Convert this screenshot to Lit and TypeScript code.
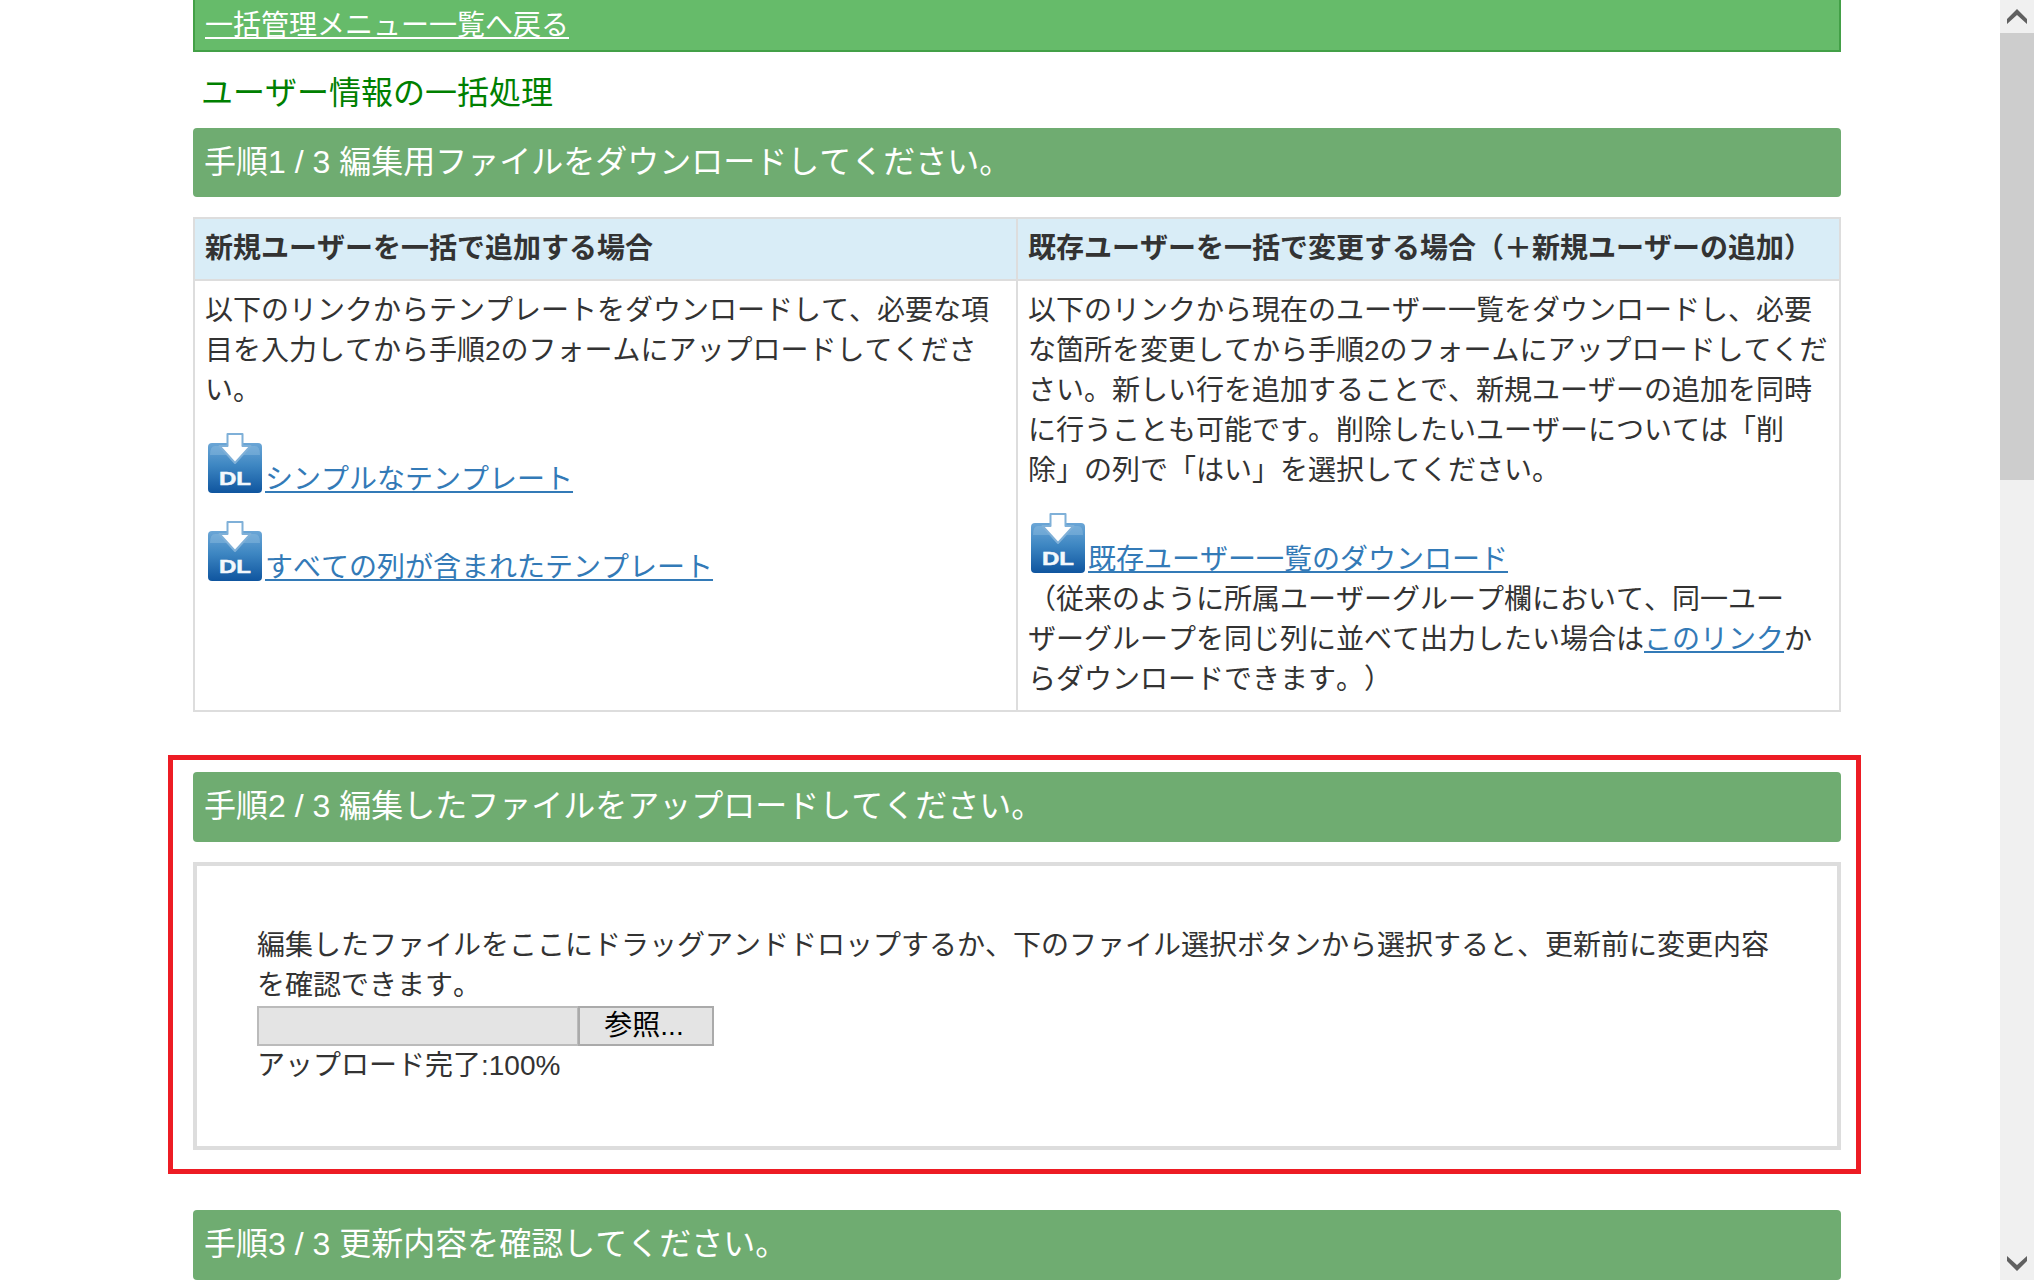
import { LitElement, html, css, svg } from "lit";
import { customElement } from "lit/decorators.js";

let gid = 0;
const dlIcon = () => {
  const id = `g${gid++}`;
  return html`<svg class="dl" viewBox="0 0 56 60" width="56" height="60" aria-hidden="true">
    ${svg`<defs><linearGradient id=${id} x1="0" y1="0" x2="0" y2="1">
      <stop offset="0" stop-color="#6ba6d6"/><stop offset=".45" stop-color="#3d86c2"/><stop offset="1" stop-color="#0f559f"/>
    </linearGradient></defs>
    <rect x="1" y="10" width="54" height="50" rx="4" fill="url(#${id})"/>
    <path d="M3 22 Q3 13 8 13 H48 Q53 13 53 22 Z" fill="#8fbde0" opacity=".45"/>
    <path d="M20.5 1 H35.5 V13 H43.5 L28 30 L12.5 13 H20.5 Z" fill="#fff" stroke="#7fb0d8" stroke-width="2" stroke-linejoin="round"/>
    <text x="28" y="52" text-anchor="middle" font-family="'Liberation Sans', sans-serif" font-weight="700" font-size="19" fill="#f4f8fc" stroke="#f4f8fc" stroke-width=".5" textLength="32" lengthAdjust="spacingAndGlyphs">DL</text>`}
  </svg>`;
};

@customElement("app-root")
export class AppRoot extends LitElement {
  static styles = css`
    :host {
      display: flex;
      height: 1280px;
      overflow: hidden;
      background: #fff;
      color: #333;
      font-family: "Liberation Sans", "Noto Sans CJK JP", sans-serif;
      font-size: 28px;
      line-height: 40px;
      line-break: strict;
      font-kerning: none;
      text-spacing-trim: space-all;
      font-feature-settings: "chws" 0, "kern" 0, "palt" 0;
    }
    .main { width: 2000px; flex: none; }
    .wrap { width: 1648px; margin-left: 193px; }
    .topbar {
      box-sizing: border-box;
      height: 52px;
      background: #66bb6a;
      border: 2px solid #43a047;
      border-top: 0;
      padding: 6px 10px 0;
      line-height: 40px;
    }
    .topbar a { color: #fff; }
    h1 {
      margin: 0;
      height: 76px;
      box-sizing: border-box;
      padding: 21px 0 0 8px;
      font-size: 32px;
      font-weight: 400;
      line-height: 40px;
      color: #008000;
    }
    .head {
      box-sizing: border-box;
      height: 69px;
      padding: 14px 11px;
      background: #6fac71;
      border-radius: 4px;
      color: #fff;
      font-size: 32px;
      line-height: 40px;
      white-space: nowrap;
    }
    .head.tall { height: 70px; }
    table {
      margin-top: 20px;
      width: 100%;
      table-layout: fixed;
      border-collapse: collapse;
      border: 2px solid #ddd;
    }
    th, td { border: 2px solid #ddd; text-align: left; vertical-align: top; }
    th { background: #d9edf7; font-weight: 700; padding: 10px; }
    td { padding: 10px; }
    p { margin: 0; }
    p.intro { margin-bottom: 22px; }
    p.dlrow { margin-bottom: 21px; }
    a { color: #337ab7; text-decoration: underline; }
    svg.dl { vertical-align: -4px; margin: 0 2px 0 2px; }
    .hl {
      margin: 43px -20px 36px -25px;
      padding: 12px 15px 19px 20px;
      border: 5px solid #ed1c24;
    }
    .box {
      box-sizing: border-box;
      height: 288px;
      margin-top: 20px;
      border: 4px solid #ddd;
      padding: 60px 60px 0;
    }
    .file { display: flex; height: 40px; }
    .file input {
      box-sizing: border-box;
      width: 321px;
      height: 40px;
      margin: 0;
      background: #e4e4e4;
      border: 2px solid #bbb;
      border-right-width: 1px;
      padding: 0;
    }
    .file button {
      box-sizing: border-box;
      width: 136px;
      height: 40px;
      margin: 0;
      padding: 0 4px 0 0;
      background: #e4e4e4;
      border: 2px solid #aaa;
      color: #000;
      font: inherit;
      line-height: 34px;
    }
    .scroll { width: 34px; flex: none; background: #f0f0f0; display: flex; flex-direction: column; height: 1280px; }
    .btn { height: 33px; flex: none; display: flex; align-items: center; justify-content: center; }
    .thumb { height: 447px; flex: none; background: #cdcdcd; }
    .track { flex: 1; }
    .btn svg { display: block; }
  `;

  render() {
    return html`
      <div class="main" lang="ja"><div class="wrap">
        <div class="topbar"><a href="#">一括管理メニュー一覧へ戻る</a></div>
        <h1>ユーザー情報の一括処理</h1>
        <div class="head">手順1 / 3 編集用ファイルをダウンロードしてください。</div>
        <table>
          <tr>
            <th>新規ユーザーを一括で追加する場合</th>
            <th>既存ユーザーを一括で変更する場合（＋新規ユーザーの追加）</th>
          </tr>
          <tr>
            <td>
              <p class="intro">以下のリンクからテンプレートをダウンロードして、必要な項目を入力してから手順2のフォームにアップロードしてください。</p>
              <p class="dlrow">${dlIcon()}<a href="#">シンプルなテンプレート</a></p>
              <p class="dlrow">${dlIcon()}<a href="#">すべての列が含まれたテンプレート</a></p>
            </td>
            <td>
              <p class="intro">以下のリンクから現在のユーザー一覧をダウンロードし、必要な箇所を変更してから手順2のフォームにアップロードしてください。新しい行を追加することで、新規ユーザーの追加を同時に行うことも可能です。削除したいユーザーについては「削除」の列で「はい」を選択してください。</p>
              <p>${dlIcon()}<a href="#">既存ユーザー一覧のダウンロード</a><br />（従来のように所属ユーザーグループ欄において、同一ユーザーグループを同じ列に並べて出力したい場合は<a href="#">このリンク</a>からダウンロードできます。）</p>
            </td>
          </tr>
        </table>
        <section class="hl">
          <div class="head tall">手順2 / 3 編集したファイルをアップロードしてください。</div>
          <div class="box">
            <p>編集したファイルをここにドラッグアンドドロップするか、下のファイル選択ボタンから選択すると、更新前に変更内容を確認できます。</p>
            <div class="file"><input type="text" disabled /><button type="button">参照...</button></div>
            <p>アップロード完了:100%</p>
          </div>
        </section>
        <div class="head tall">手順3 / 3 更新内容を確認してください。</div>
      </div></div>
      <div class="scroll">
        <div class="btn"><svg width="20" height="15" viewBox="0 0 20 15"><path d="M0 10 L10 0 L20 10 V15 L10 6 L0 15 Z" fill="#606060"/></svg></div>
        <div class="thumb"></div>
        <div class="track"></div>
        <div class="btn"><svg width="20" height="15" viewBox="0 0 20 15"><path d="M0 0 L10 9 L20 0 V5 L10 15 L0 5 Z" fill="#606060"/></svg></div>
      </div>
    `;
  }
}
